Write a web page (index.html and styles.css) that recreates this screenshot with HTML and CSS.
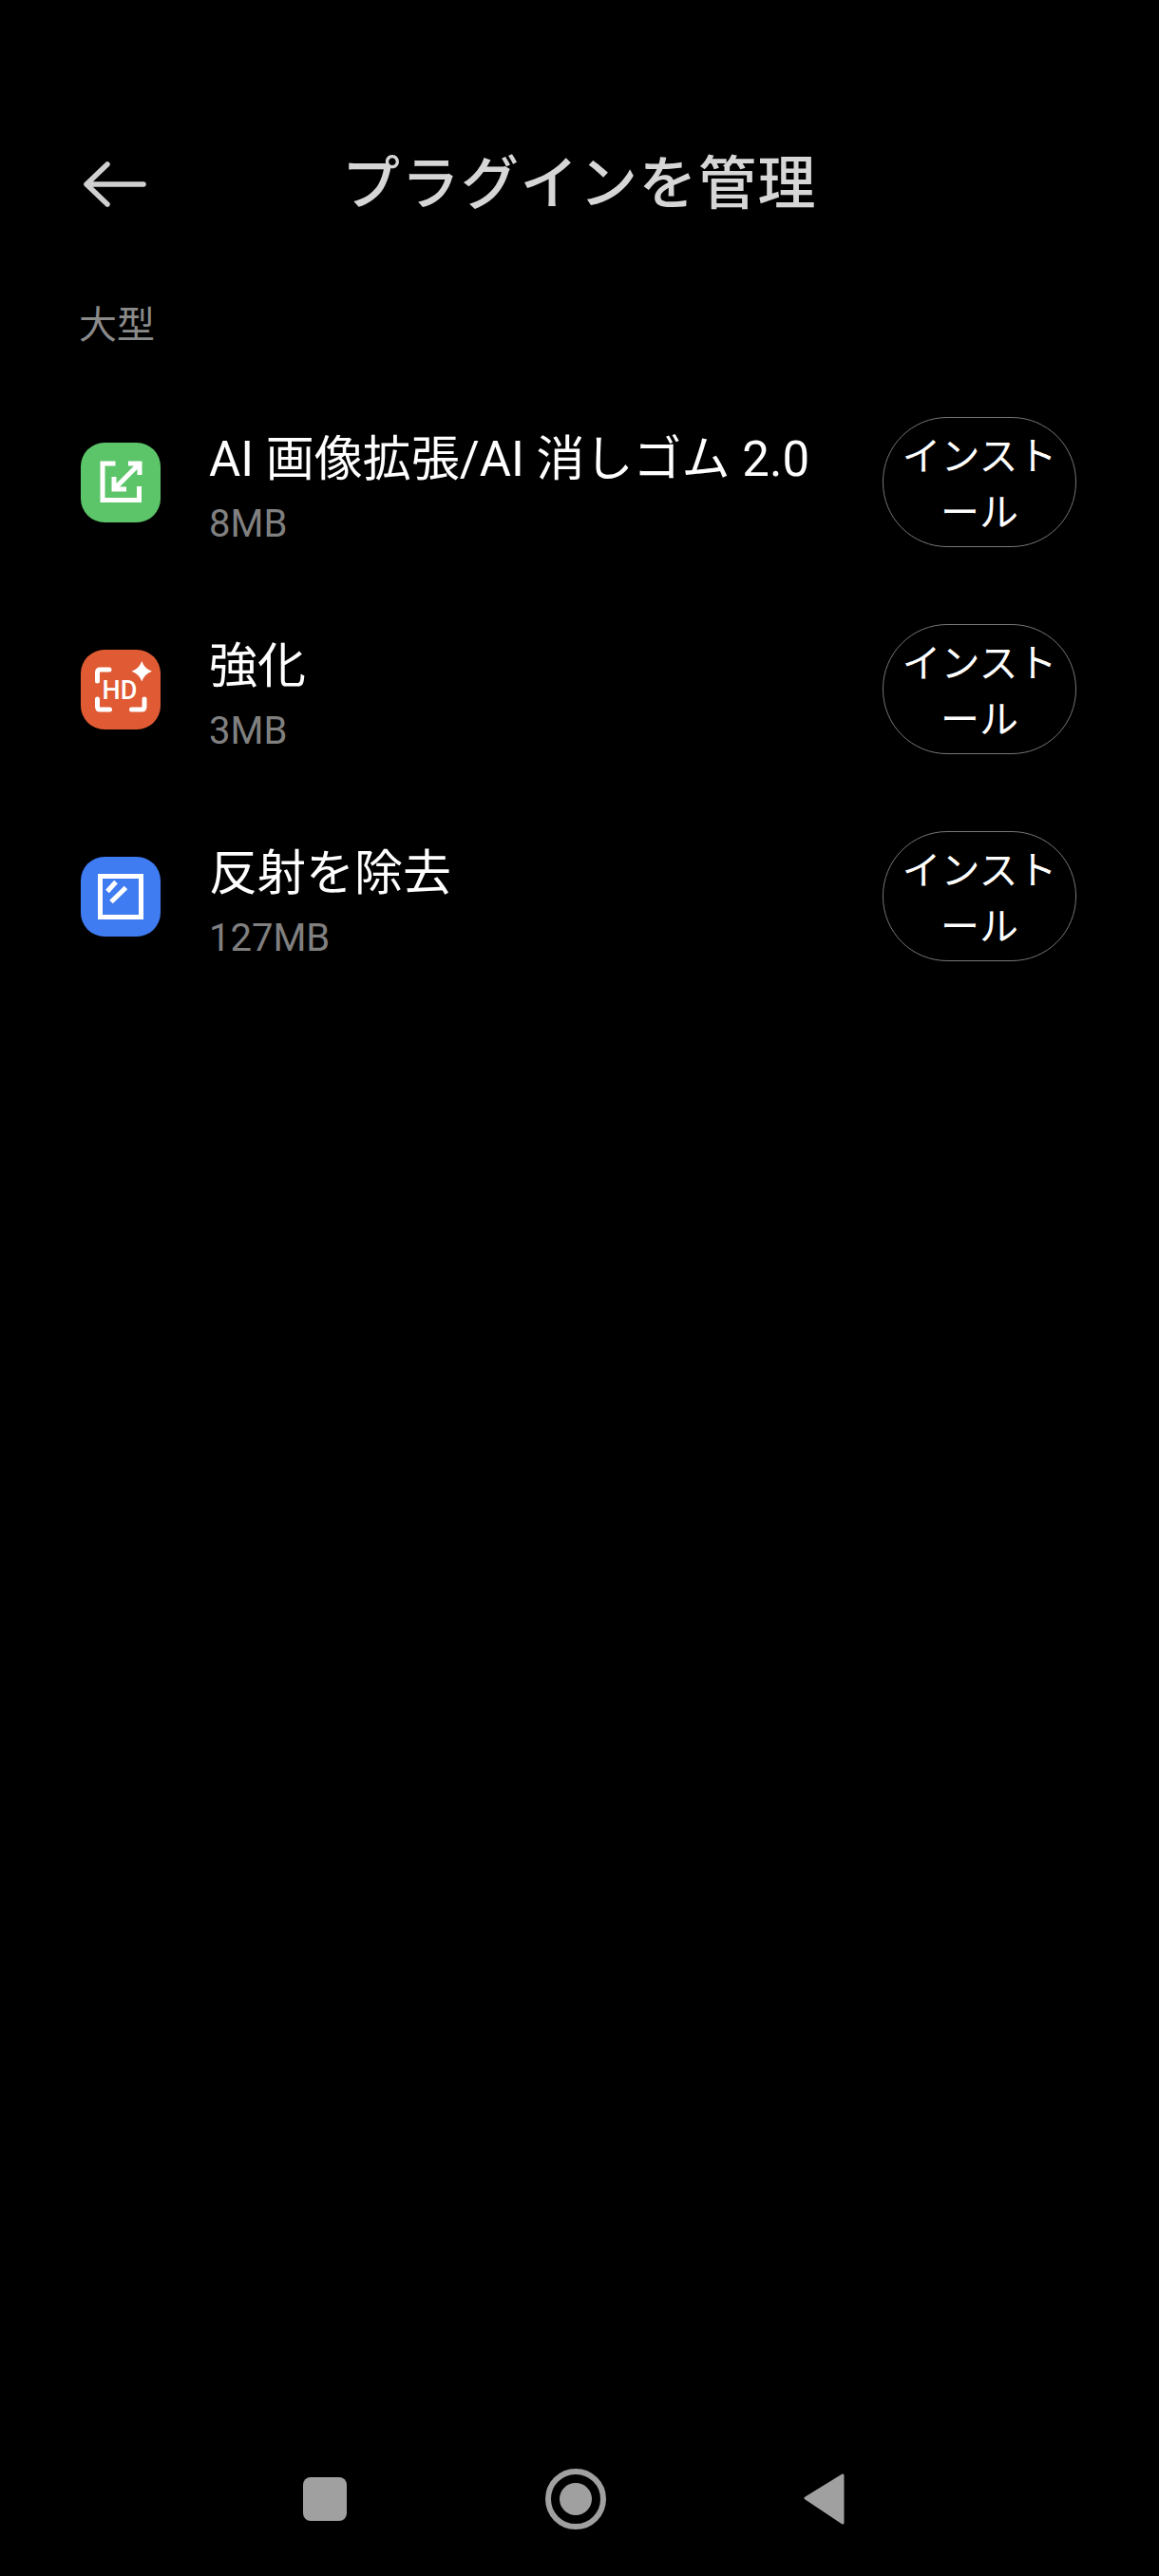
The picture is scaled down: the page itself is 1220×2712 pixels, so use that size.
FILE: index.html
```html
<!DOCTYPE html>
<html lang="ja">
<head>
<meta charset="utf-8">
<title>プラグインを管理</title>
<link rel="stylesheet" href="styles.css">
</head>
<body>
<div class="page">
  <header class="header">
    <svg class="back" viewBox="0 0 70 50" width="70" height="50"><path d="M3 25H63M25 4 3 25 25 46"/></svg>
    <h1 class="title">プラグインを管理</h1>
    <div></div>
  </header>
  <main class="content">
    <div class="section">大型</div>
    <ul class="list">
      <li class="row">
        <svg class="icon" viewBox="0 0 84 84" width="84" height="84"><rect class="bg green" width="84" height="84" rx="25"/><path class="glyph" d="M36.500 22H23V60.500H61.500V46M37 47 60 24M50 22H62V34M35 36V49H48"/></svg>
        <div class="text"><div class="name">AI 画像拡張/AI 消しゴム 2.0</div><div class="size">8MB</div></div>
        <button class="install">インストール</button>
      </li>
      <li class="row">
        <svg class="icon" viewBox="0 0 84 84" width="84" height="84"><rect class="bg orange" width="84" height="84" rx="25"/><path class="glyph thin" d="M17.500 33V24Q17.500 21 20.500 21H30M17.500 52V60Q17.500 63 20.500 63H30.500M53.500 63H64Q67 63 67 60V52"/><path class="star" d="M64.300 12Q67 20 75 22.700 67 25.500 64.300 33.500 61.500 25.500 53.500 22.700 61.500 20 64.300 12Z"/><text class="hd" x="41" y="51.500" text-anchor="middle">HD</text></svg>
        <div class="text"><div class="name">強化</div><div class="size">3MB</div></div>
        <button class="install">インストール</button>
      </li>
      <li class="row">
        <svg class="icon" viewBox="0 0 84 84" width="84" height="84"><rect class="bg blue" width="84" height="84" rx="25"/><rect class="glyph" x="20.500" y="20.500" width="43" height="43"/><path class="glyph" d="M28 36.500 37 26.500M32 47.500 47.500 32.500"/></svg>
        <div class="text"><div class="name">反射を除去</div><div class="size">127MB</div></div>
        <button class="install">インストール</button>
      </li>
    </ul>
  </main>
  <nav class="nav">
    <svg class="navicon" viewBox="0 0 46 46" width="46" height="46"><rect width="46" height="46" rx="8"/></svg>
    <svg class="navicon" viewBox="0 0 64 64" width="64" height="64"><circle class="ring" cx="32" cy="32" r="29"/><circle cx="32" cy="32" r="17"/></svg>
    <svg class="navicon" viewBox="0 0 44 54" width="44" height="54"><path class="tri" d="M41 2V52L2 26Z"/></svg>
  </nav>
</div>
</body>
</html>
```
FILE: styles.css
```css
* { box-sizing: border-box; }
html, body { margin: 0; background: #000; }
body { font-family: Roboto, "Noto Sans CJK JP", sans-serif; }
.page { width: 1220px; height: 2712px; display: flex; flex-direction: column; }
.header { display: grid; grid-template-columns: 1fr auto 1fr; align-items: center; padding: 150px 88px 0; height: 238px; }
.back { fill: none; stroke: #d0d0d0; stroke-width: 5.500; stroke-linecap: round; stroke-linejoin: round; }
.title { margin: 0; font-size: 61px; font-weight: 500; line-height: 88px; color: #d6d6d6; letter-spacing: 1.500px; }
.content { flex: 1; padding: 80px 87px 0 83px; }
.section { font-size: 40px; line-height: 50px; color: #8a8a8a; }
.list { list-style: none; margin: 71px 0 0; padding: 0; display: flex; flex-direction: column; gap: 81px; }
.row { display: flex; align-items: center; height: 137px; }
.icon { flex: none; margin-left: 2px; margin-right: 51px; }
.text { flex: 1; padding-top: 12px; }
.name { font-size: 51px; line-height: 66px; color: #fff; }
.size { font-size: 40px; line-height: 50px; margin-top: 10px; color: #808080; }
.install { flex: none; width: 204px; height: 137px; padding: 6px 16px 0; border: 1.500px solid #777; border-radius: 68px; background: transparent; color: #fff; font-family: inherit; font-size: 41px; line-height: 59px; }
.bg.green { fill: #5cc569; }
.bg.orange { fill: #e05b34; }
.bg.blue { fill: #3f7bf1; }
.glyph { fill: none; stroke: #fff; stroke-width: 5; }
.glyph.thin { stroke-linecap: round; }
.star { fill: #fff; }
.hd { fill: #fff; font-family: Roboto, sans-serif; font-size: 27px; font-weight: 500; }
.nav { display: flex; justify-content: space-between; align-items: center; height: 64px; margin-bottom: 49px; padding: 0 330px 0 319px; }
.navicon { fill: #a0a0a0; }
.ring { fill: none; stroke: #a0a0a0; stroke-width: 6; }
.tri { stroke: #a0a0a0; stroke-width: 3; stroke-linejoin: round; }
```
